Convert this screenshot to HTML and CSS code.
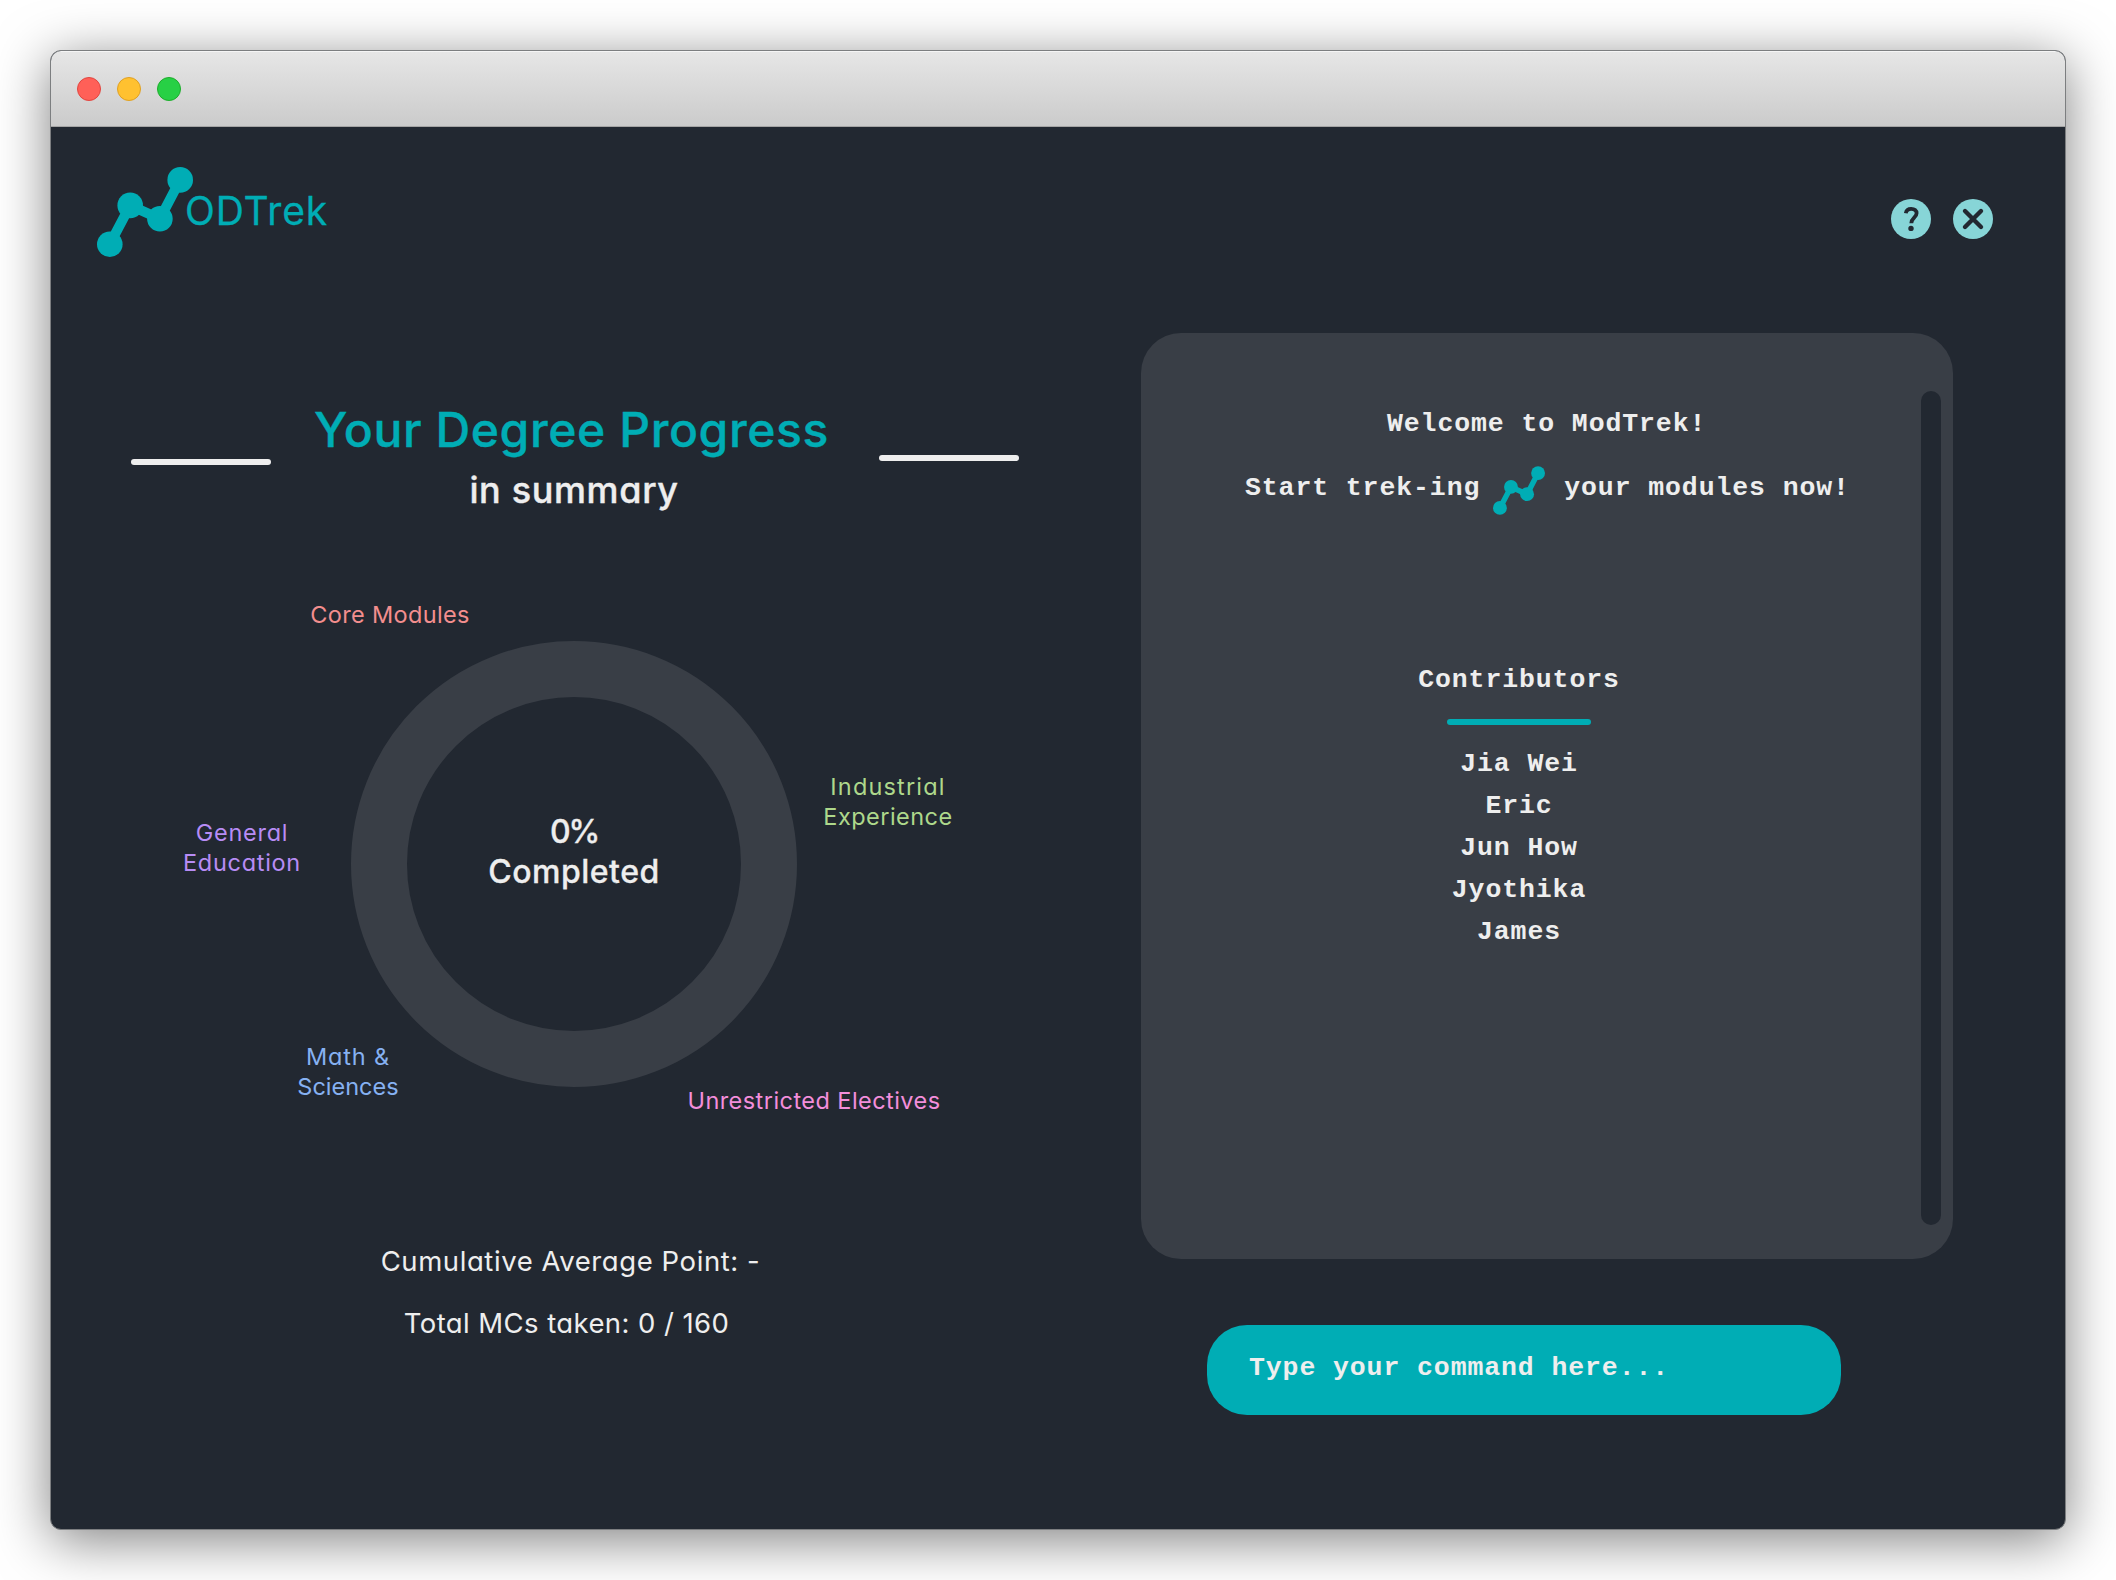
FILE: index.html
```html
<!DOCTYPE html>
<html lang="en">
<head>
<meta charset="utf-8">
<title>ModTrek</title>
<link rel="stylesheet" href="styles.css">
</head>
<body>
<svg class="defs" width="0" height="0" aria-hidden="true">
  <symbol id="trek" viewBox="0 0 96 90">
    <path d="M12.8 77.2 33.2 38.4 62.9 51.8 83.2 12.9" fill="none" stroke="currentColor" stroke-width="10"/>
    <g fill="currentColor"><circle cx="12.8" cy="77.2" r="12.8"/><circle cx="33.2" cy="38.4" r="12.8"/><circle cx="62.9" cy="51.8" r="12.8"/><circle cx="83.2" cy="12.9" r="12.8"/></g>
  </symbol>
</svg>
<div class="window">
  <div class="titlebar"><i class="dot red"></i><i class="dot yellow"></i><i class="dot green"></i></div>
  <header class="header">
    <div class="brand"><svg class="brand-mark"><use href="#trek"/></svg><span class="brand-name">ODTrek</span></div>
    <div class="actions">
      <svg class="action" viewBox="0 0 40 40"><circle cx="20" cy="20" r="20"/><path d="M14.8 14.2C15.3 11.3 17.3 9.8 20.2 9.8c3.3 0 5.4 1.8 5.4 4.5 0 4.2-5.3 4.6-5.3 9.9"/><circle class="ink" cx="20" cy="29.4" r="2.7"/></svg>
      <svg class="action cross" viewBox="0 0 40 40"><circle cx="20" cy="20" r="20"/><path d="M12 12 28 28M28 12 12 28"/></svg>
    </div>
  </header>
  <main class="main">
    <section class="progress">
      <div class="heading">
        <span class="rule rule-left"></span>
        <div class="heading-text"><h1>Your Degree Progress</h1><h2>in summary</h2></div>
        <span class="rule rule-right"></span>
      </div>
      <div class="chart">
        <div class="ring"><p class="done"><span class="percent">0%</span><br>Completed</p></div>
        <p class="label core">Core Modules</p>
        <p class="label industrial"><span class="wide">Industrial</span><br>Experience</p>
        <p class="label general">General<br>Education</p>
        <p class="label math"><span class="medium">Math &amp;</span><br>Sciences</p>
        <p class="label electives">Unrestricted Electives</p>
      </div>
      <div class="stats"><p class="cap">Cumulative Average Point: -</p><p class="mcs">Total MCs taken: 0 / 160</p></div>
    </section>
    <section class="console">
      <div class="output">
        <div class="transcript">
          <p class="welcome">Welcome to ModTrek!</p>
          <p class="start"><span>Start trek-ing</span><svg class="start-mark"><use href="#trek"/></svg><span>your modules now!</span></p>
          <div class="contributors">
            <h3>Contributors</h3>
            <span class="underline"></span>
            <ul><li>Jia Wei</li><li>Eric</li><li>Jun How</li><li>Jyothika</li><li>James</li></ul>
          </div>
        </div>
        <div class="scrollbar"></div>
      </div>
      <div class="command">Type your command here...</div>
    </section>
  </main>
</div>
</body>
</html>
```
FILE: styles.css
```css
* { box-sizing: border-box; }
body { margin: 0; background: #fff; color: #eee; font-family: Inter, "Noto Sans", sans-serif; font-feature-settings: "cv11" 1; }
p, h1, h2, h3, ul { margin: 0; padding: 0; }
ul { list-style: none; }
.defs { position: absolute; }
.window { width: 2016px; height: 1480px; margin: 50px; border: 1px solid #7c7e80; border-radius: 11px; overflow: hidden; background: #222831; box-shadow: 0 10px 54px rgba(0, 0, 0, .5); display: flex; flex-direction: column; }
.titlebar { height: 76px; display: flex; align-items: center; gap: 16px; padding-left: 26px; background: linear-gradient(#e6e6e6, #cbcbcb); border-top: 1px solid #f5f5f5; border-bottom: 1px solid #a5a5a5; }
.dot { width: 24px; height: 24px; border-radius: 50%; border: 1px solid; }
.red { background: #ff6058; border-color: #e14640; }
.yellow { background: #ffc130; border-color: #dfa023; }
.green { background: #27d045; border-color: #1dad2b; }
.header { height: 206px; display: flex; justify-content: space-between; padding: 40px 72px 0 46px; }
.brand { display: flex; color: #00adb5; }
.brand-mark { width: 96px; height: 90px; }
.brand-name { margin-left: -8px; margin-top: 14px; font-size: 39px; line-height: 60px; letter-spacing: .022em; font-weight: 400; -webkit-text-stroke: .3px; }
.actions { display: flex; gap: 22px; margin-top: 32px; }
.action { width: 40px; height: 40px; fill: #87d5d7; stroke: #222831; stroke-width: 3.8; }
.action circle { stroke: none; }
.action path { fill: none; }
.action .ink { fill: #222831; }
.cross { stroke-width: 4.4; stroke-linecap: round; }
.main { display: grid; grid-template-columns: 1090px 812px; flex: 1; }
.progress { padding: 67px 122px 0 80px; }
.heading { display: flex; height: 120px; }
.rule { width: 140px; height: 6px; border-radius: 3px; background: #eee; }
.rule-left { margin-top: 59px; }
.rule-right { margin-top: 55px; }
.heading-text { flex: 1; text-align: center; white-space: nowrap; }
h1 { padding-right: 7px; color: #00adb5; font-size: 48px; line-height: 60px; font-weight: 550; letter-spacing: .013em; -webkit-text-stroke: .4px; }
h2 { padding-right: 2px; font-size: 36px; line-height: 60px; font-weight: 500; letter-spacing: .018em; -webkit-text-stroke: .4px; }
.chart { position: relative; height: 600px; margin-top: 0; padding: 121px 0 0 220px; }
.ring { width: 446px; height: 446px; border: 56px solid #393e46; border-radius: 50%; display: flex; justify-content: center; padding-top: 115px; }
.done { text-align: center; font-size: 32px; line-height: 40px; font-weight: 500; letter-spacing: .016em; -webkit-text-stroke: .3px; }
.percent { letter-spacing: -.07em; }
.label { position: absolute; transform: translateX(-50%); text-align: center; white-space: nowrap; font-size: 23.5px; line-height: 30px; letter-spacing: .014em; }
.core { left: 259px; top: 80px; color: #f38e8e; }
.industrial { left: 757px; top: 252px; color: #aed88b; letter-spacing: .02em; }
.general { left: 111px; top: 298px; color: #b78cf5; letter-spacing: .03em; }
.math { left: 217px; top: 522px; color: #86b1f2; letter-spacing: 0; }
.wide { letter-spacing: .05em; }
.medium { letter-spacing: .035em; }
.electives { left: 683px; top: 566px; color: #f38edb; letter-spacing: .019em; }
.stats { margin-top: 110px; text-align: center; font-size: 27.5px; line-height: 62px; letter-spacing: .021em; }
.cap { padding-right: 9px; }
.mcs { padding-right: 17px; letter-spacing: .015em; }
.console { font-family: "Liberation Mono", monospace; font-size: 26.5px; font-weight: 700; letter-spacing: .9px; }
.output { height: 926px; border-radius: 40px; background: #393e46; display: flex; justify-content: space-between; padding: 58px 12px 34px 0; }
.transcript { width: 757px; padding-top: 2px; }
.welcome { padding-left: 246px; line-height: 62px; }
.start { display: flex; padding-left: 104px; margin-top: 2px; line-height: 62px; }
.start-mark { width: 52px; height: 49px; margin: 9px 19px 0 13px; color: #00adb5; }
.contributors { display: flex; flex-direction: column; align-items: center; margin-top: 131px; padding-right: 1px; text-align: center; }
h3 { font-size: 26.5px; line-height: 60px; }
.underline { width: 144px; height: 6px; border-radius: 3px; background: #00adb5; margin: 9px 0 18px; }
li { line-height: 42px; }
.scrollbar { width: 20px; border-radius: 10px; background: #222831; }
.command { width: 634px; height: 90px; margin: 66px 0 0 66px; padding-left: 42px; border-radius: 40px; background: #00adb5; line-height: 86px; }
```
